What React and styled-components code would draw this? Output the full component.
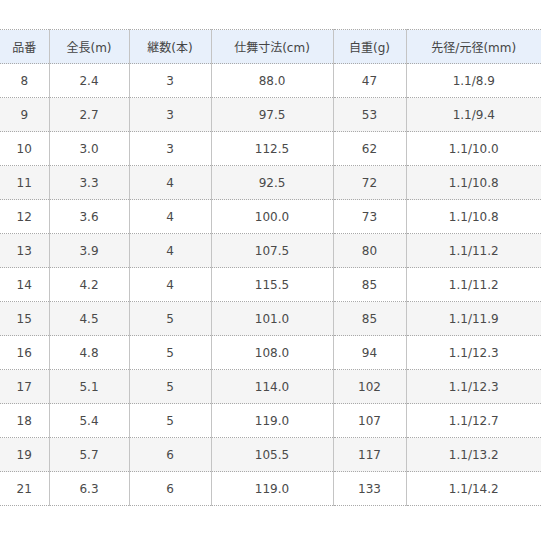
import React from "react";
import styled, { createGlobalStyle } from "styled-components";

const GlobalStyle = createGlobalStyle`
  html, body {
    margin: 0;
    padding: 0;
    background: #ffffff;
  }
  body {
    font-family: "DejaVu Sans", Verdana, "Noto Sans CJK JP", sans-serif;
    overflow: hidden;
  }
`;

const Page = styled.div`
  width: 541px;
  height: 541px;
  padding-top: 29px;
  box-sizing: border-box;
  overflow: hidden;
`;

const SpecTable = styled.table`
  width: 541px;
  border-collapse: collapse;
  table-layout: fixed;
  font-size: 12px;
  color: #4a4a4a;
  border-top: 1px dotted #a9a9a9;
`;

const HeadCell = styled.th`
  height: 33px;
  padding: 0;
  font-weight: normal;
  text-align: center;
  background: #e8f0fb;
  color: #444;
  border-bottom: 1px dotted #a9a9a9;
  border-left: 1px solid #c4c4c4;
  &:first-child {
    border-left: none;
  }
`;

const Row = styled.tr`
  background: ${(p) => (p.$shaded ? "#f5f5f5" : "#ffffff")};
`;

const Cell = styled.td`
  height: 33px;
  padding: 0;
  text-align: center;
  border-bottom: 1px dotted #a9a9a9;
  border-left: 1px solid #c4c4c4;
  &:first-child {
    border-left: none;
  }
`;

const columns = [
  { label: "品番", width: 49 },
  { label: "全長(m)", width: 80 },
  { label: "継数(本)", width: 82 },
  { label: "仕舞寸法(cm)", width: 122 },
  { label: "自重(g)", width: 73 },
  { label: "先径/元径(mm)", width: 135 },
];

const rows = [
  ["8", "2.4", "3", "88.0", "47", "1.1/8.9"],
  ["9", "2.7", "3", "97.5", "53", "1.1/9.4"],
  ["10", "3.0", "3", "112.5", "62", "1.1/10.0"],
  ["11", "3.3", "4", "92.5", "72", "1.1/10.8"],
  ["12", "3.6", "4", "100.0", "73", "1.1/10.8"],
  ["13", "3.9", "4", "107.5", "80", "1.1/11.2"],
  ["14", "4.2", "4", "115.5", "85", "1.1/11.2"],
  ["15", "4.5", "5", "101.0", "85", "1.1/11.9"],
  ["16", "4.8", "5", "108.0", "94", "1.1/12.3"],
  ["17", "5.1", "5", "114.0", "102", "1.1/12.3"],
  ["18", "5.4", "5", "119.0", "107", "1.1/12.7"],
  ["19", "5.7", "6", "105.5", "117", "1.1/13.2"],
  ["21", "6.3", "6", "119.0", "133", "1.1/14.2"],
];

const App = () => {
  return (
    <Page>
      <GlobalStyle />
      <SpecTable>
        <colgroup>
          {columns.map((c) => (
            <col key={c.label} style={{ width: c.width }} />
          ))}
        </colgroup>
        <thead>
          <tr>
            {columns.map((c) => (
              <HeadCell key={c.label}>{c.label}</HeadCell>
            ))}
          </tr>
        </thead>
        <tbody>
          {rows.map((r, i) => (
            <Row key={r[0]} $shaded={i % 2 === 1}>
              {r.map((v, j) => (
                <Cell key={j}>{v}</Cell>
              ))}
            </Row>
          ))}
        </tbody>
      </SpecTable>
    </Page>
  );
};

export default App;
